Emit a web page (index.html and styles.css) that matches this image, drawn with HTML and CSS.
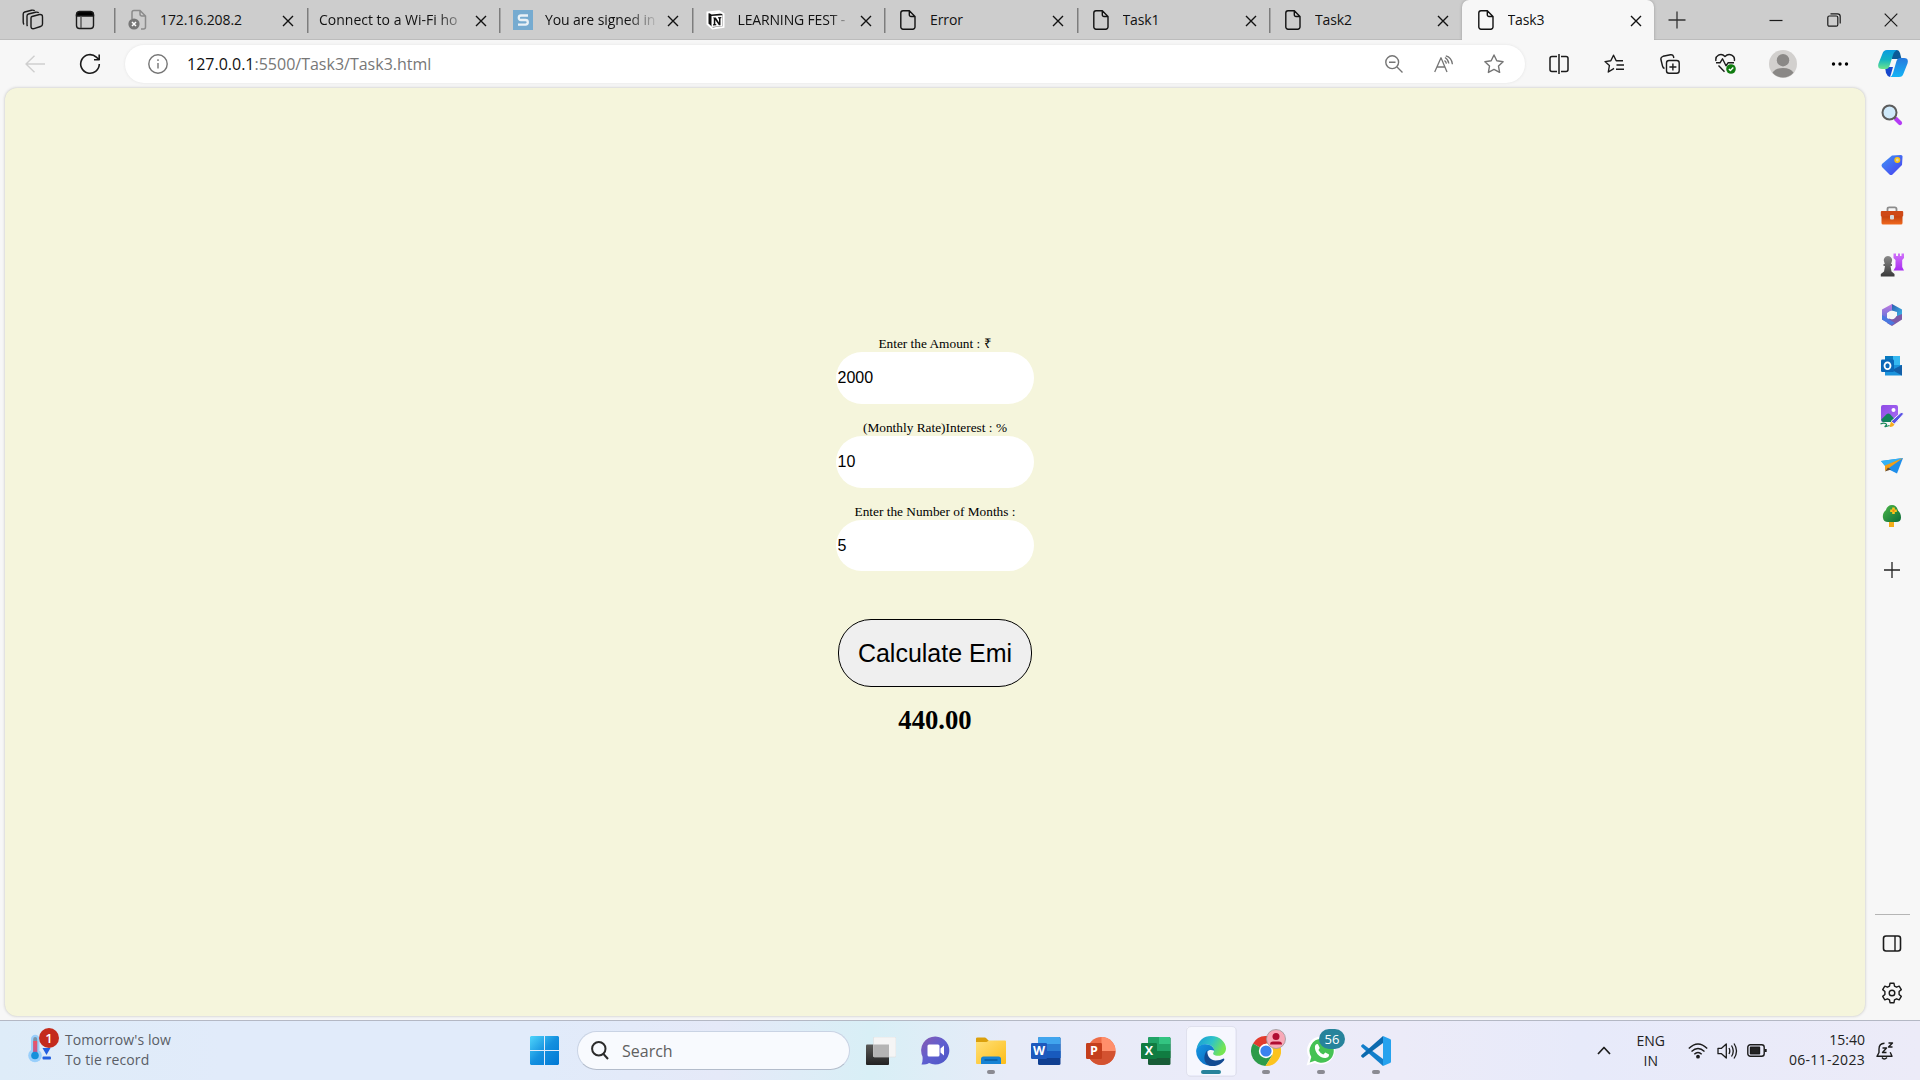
FILE: index.html
```html
<!DOCTYPE html>
<html lang="en">
<head>
<meta charset="utf-8">
<title>Task3</title>
<link rel="stylesheet" href="styles.css">
</head>
<body>
<svg class="defs" width="0" height="0" aria-hidden="true">
  <defs>
    <symbol id="doc" viewBox="0 0 16 20"><path d="M3 .8h6.3L15 6.5V17a2.200 2.200 0 0 1-2.200 2.200H3A2.200 2.200 0 0 1 .8 17V3A2.200 2.200 0 0 1 3 .8zM9.300 1v3.800a1.700 1.700 0 0 0 1.700 1.700h4"/></symbol>
    <symbol id="close" viewBox="0 0 12 12"><path d="M1 1l10 10M11 1L1 11"/></symbol>
    <linearGradient id="gTag" x1="0" y1="0" x2="1" y2="1"><stop offset="0" stop-color="#3f97f5"/><stop offset="1" stop-color="#4a3cf0"/></linearGradient>
    <linearGradient id="gBox" x1="0" y1="0" x2="0" y2="1"><stop offset="0" stop-color="#b8380c"/><stop offset="1" stop-color="#f0691e"/></linearGradient>
    <linearGradient id="gPawn" x1="0" y1="0" x2="0" y2="1"><stop offset="0" stop-color="#8a8a8a"/><stop offset="1" stop-color="#3a3a3a"/></linearGradient>
    <linearGradient id="gRook" x1="0" y1="0" x2="0" y2="1"><stop offset="0" stop-color="#d173fa"/><stop offset="1" stop-color="#a82cf0"/></linearGradient>
    <linearGradient id="gWin" x1="0" y1="0" x2="1" y2="1"><stop offset="0" stop-color="#4fd5fb"/><stop offset=".5" stop-color="#1490df"/><stop offset="1" stop-color="#0078d4"/></linearGradient>
    <linearGradient id="gChat" x1="0" y1="0" x2="1" y2="1"><stop offset="0" stop-color="#8a5bb0"/><stop offset=".5" stop-color="#5f5fd0"/><stop offset="1" stop-color="#4b55c5"/></linearGradient>
    <linearGradient id="gFold" x1="0" y1="0" x2="1" y2="1"><stop offset="0" stop-color="#ffe078"/><stop offset="1" stop-color="#fdbd18"/></linearGradient>
    <linearGradient id="gCopA" x1="0" y1="0" x2="0" y2="1"><stop offset="0" stop-color="#0a9be0"/><stop offset=".5" stop-color="#12b3c4"/><stop offset="1" stop-color="#6ce58b"/></linearGradient>
    <linearGradient id="gCopB" x1="0" y1="0" x2="0" y2="1"><stop offset="0" stop-color="#2679dd"/><stop offset="1" stop-color="#14b4f6"/></linearGradient>
    <linearGradient id="gEdgeA" x1="0" y1="0" x2="1" y2=".4"><stop offset="0" stop-color="#1596d9"/><stop offset=".55" stop-color="#2fc3c9"/><stop offset="1" stop-color="#75e552"/></linearGradient>
    <linearGradient id="gEdgeB" x1="0" y1="0" x2="1" y2="1"><stop offset="0" stop-color="#1597e2"/><stop offset="1" stop-color="#0b62bb"/></linearGradient>
    <linearGradient id="gTree" x1="0" y1="0" x2="1" y2="1"><stop offset="0" stop-color="#4db847"/><stop offset="1" stop-color="#0b6b38"/></linearGradient>
    <linearGradient id="gView" x1="0" y1="0" x2="0" y2="1"><stop offset="0" stop-color="#5a5a58"/><stop offset="1" stop-color="#222"/></linearGradient>
    <linearGradient id="gPic" x1="0" y1="0" x2="1" y2="1"><stop offset="0" stop-color="#8f4be6"/><stop offset="1" stop-color="#a86cf3"/></linearGradient>
    <linearGradient id="gTherm" x1="0" y1="0" x2="0" y2="1"><stop offset="0" stop-color="#f05264"/><stop offset="1" stop-color="#b55b9c"/></linearGradient>
    <linearGradient id="gHexA" x1="0" y1="0" x2="1" y2="1"><stop offset="0" stop-color="#2c4fa5"/><stop offset="1" stop-color="#3dc3f2"/></linearGradient>
    <linearGradient id="gHexB" x1="0" y1="0" x2="0" y2="1"><stop offset="0" stop-color="#c27be0"/><stop offset="1" stop-color="#4c6fd8"/></linearGradient>
  </defs>
</svg>

<div class="window">
  <header class="tabstrip">
    <div class="strip-tools">
      <svg class="line" width="22" height="22" viewBox="0 0 22 22"><path d="M10 7.500L17.500 5.500Q20.500 5 20.500 8V15Q20.500 17 18.500 17.500L12 19.600Q9 20.200 9 17.500V9Q9 7.800 10 7.500zM5.500 17.200Q5 16.500 5 15.500V7Q5 5.500 6.500 5L13.500 3.200Q16 2.800 16.700 4M2 15.500Q1.200 14.500 1.200 13V5Q1.200 3.500 2.700 3L9.500 1.200Q12 .8 12.600 2"/></svg>
      <svg class="line" width="20" height="20" viewBox="0 0 20 20"><rect x="1.500" y="2" width="17" height="16.500" rx="3"/><path d="M1.500 5a3.500 3.500 0 0 1 3-3.500h11a3.500 3.500 0 0 1 3 3.500v1h-17z" fill="#000"/><path d="M6 6v12" stroke="#555"/></svg>
    </div>
    <nav class="tabs">
      <div class="tab">
        <svg class="fav" width="20" height="22" viewBox="0 0 20 22"><path d="M4 10V3.500Q4 1.500 6 1.500h6l5.500 5.500v11q0 2-2 2H13M12 1.500V5q0 2 2 2h3.500" fill="none" stroke="#8b8b8b" stroke-width="1.500"/><circle cx="6" cy="15" r="5.600" fill="#777"/><path d="M4 13l4 4M8 13l-4 4" stroke="#fff" stroke-width="1.500"/></svg>
        <span class="title">172.16.208.2</span><svg class="x"><use href="#close"/></svg>
      </div>
      <div class="tab no-icon"><span class="title fade">Connect to a Wi-Fi ho</span><svg class="x"><use href="#close"/></svg></div>
      <div class="tab">
        <svg class="fav" width="20" height="20" viewBox="0 0 20 20"><path fill="#76abd0" d="M0 0h20v20H0z"/><path d="M15 5.500H8Q5.800 5.500 5.800 7.800T8 10h4.500Q14.800 10 14.800 12.300T12.500 14.600H5" fill="none" stroke="#e9f1f6" stroke-width="2.300"/></svg>
        <span class="title fade">You are signed in</span><svg class="x"><use href="#close"/></svg>
      </div>
      <div class="tab">
        <svg class="fav" width="20" height="20" viewBox="0 0 20 20"><path d="M1.500 2.500L13 1.200l4.500 2.800v13L6.500 18.500 1.500 14z" stroke="#fff" stroke-width="2" fill="#111"/><path d="M3 2.800l10-1 3 1.800-10.500.8z" fill="#fff"/><path d="M5.500 6l11-.7v10.900l-11 .8z" fill="#fff"/><path d="M7 7.500h2.800l3.200 5V8.500l-1-.2v-1l3.300-.2v1l-.8.300v6.900h-1.600L9.300 10v4l1 .3v.9l-3.300.2v-1l.8-.3V8.700z" fill="#111"/></svg>
        <span class="title fade late">LEARNING FEST -</span><svg class="x"><use href="#close"/></svg>
      </div>
      <div class="tab"><svg class="fav doc"><use href="#doc"/></svg><span class="title">Error</span><svg class="x"><use href="#close"/></svg></div>
      <div class="tab"><svg class="fav doc"><use href="#doc"/></svg><span class="title">Task1</span><svg class="x"><use href="#close"/></svg></div>
      <div class="tab"><svg class="fav doc"><use href="#doc"/></svg><span class="title">Task2</span><svg class="x"><use href="#close"/></svg></div>
      <div class="tab active"><svg class="fav doc"><use href="#doc"/></svg><span class="title">Task3</span><svg class="x"><use href="#close"/></svg></div>
    </nav>
    <svg class="newtab" width="18" height="18" viewBox="0 0 18 18"><path d="M9 .5v17M.5 9h17"/></svg>
    <div class="controls">
      <svg width="14" height="14" viewBox="0 0 14 14"><path d="M.5 7.500h13"/></svg>
      <svg width="14" height="14" viewBox="0 0 14 14"><rect x=".8" y="3" width="10" height="10.200" rx="1.500"/><path d="M3.500 .8h7q2.700 0 2.700 2.700v7"/></svg>
      <svg width="14" height="14" viewBox="0 0 14 14"><path d="M.7 .7l12.600 12.600M13.300 .7L.7 13.300"/></svg>
    </div>
  </header>

  <div class="toolbar">
    <div class="nav-tools">
      <svg class="line pale" width="20" height="18" viewBox="0 0 20 18"><path d="M20 9H1M9.500 .8L1 9l8.500 8.200"/></svg>
      <svg class="line" width="22" height="22" viewBox="0 0 22 22"><path d="M20.300 11a9.300 9.300 0 1 1-3-6.900L20 6.500M20.200 1.500v5.200h-5.200" stroke-width="1.600"/></svg>
    </div>
    <div class="address">
      <svg class="line grey" width="20" height="20" viewBox="0 0 20 20"><circle cx="10" cy="10" r="9.200"/><path d="M10 9v5.500M10 5.300v1.700"/></svg>
      <span class="url"><b>127.0.0.1</b>:5500/Task3/Task3.html</span>
      <svg class="line grey" width="18" height="18" viewBox="0 0 18 18"><circle cx="7.200" cy="7.200" r="6.400"/><path d="M12 12l5.500 5.500M4 7.200h6.500"/></svg>
      <svg class="line grey" width="19" height="18" viewBox="0 0 19 18"><path d="M.7 17L7 2.800 13 17M3 12h8M11 2.500a8 8 0 0 1 3.800 6M11.800 .8c4 1 6.200 4.200 6.600 8.500M10.500 5.500q1.600 1.200 1.900 3.200" stroke-width="1.300"/></svg>
      <svg class="line grey" width="20" height="20" viewBox="0 0 20 20"><path d="M10 1l2.800 5.800 6.300.9-4.600 4.400 1.100 6.300L10 15.400l-5.600 3 1.100-6.300L.9 7.700l6.300-.9z"/></svg>
    </div>
    <div class="actions">
      <svg class="line" width="20" height="20" viewBox="0 0 20 20"><path d="M8 2.500H3Q1 2.500 1 4.500v11q0 2 2 2h5M12 2.500h5q2 0 2 2v11q0 2-2 2h-5M10 0v20" stroke-width="1.500"/></svg>
      <svg class="line" width="20" height="20" viewBox="0 0 20 20"><path d="M8.500 15.300L4.300 18l1.100-6.500L1 7.600l5.800-.8L9.500 1.200l2.700 5.600H19M12.500 11H20M12 15.200h8M8.500 15.300l1.500-1"/></svg>
      <svg class="line" width="20" height="20" viewBox="0 0 20 20"><rect x="6.500" y="6.500" width="12.700" height="12.700" rx="2.500"/><path d="M12.900 9.500v7M9.400 13h7M4.500 14.500Q3 14 2.500 12L.9 5.500Q.5 3 3 2.300L10.500.8Q13 .5 13.500 2.500L13.800 4"/></svg>
      <svg class="line" width="21" height="21" viewBox="0 0 21 21"><path d="M1 8C-.2 3 5.800-1 10 3.500 14.300-1 20.500 3 19.300 8M1 9.800h4l2.500-4 3.500 7 2-3h6M3.500 12.500l6 6.200"/><circle cx="16" cy="16" r="4.800" fill="#107c10" stroke="none"/><path d="M13.900 16l1.500 1.500 2.900-3" stroke="#fff"/></svg>
      <svg width="28" height="28" viewBox="0 0 28 28"><circle cx="14" cy="14" r="14" fill="#d2d0ce"/><circle cx="14" cy="10.200" r="6.200" fill="#8a8886"/><path d="M3.500 22.800Q6 18 14 18t10.500 4.800A14 14 0 0 1 3.500 22.800z" fill="#8a8886"/></svg>
      <svg width="18" height="6" viewBox="0 0 18 6"><circle cx="2.500" cy="3" r="1.700"/><circle cx="9" cy="3" r="1.700"/><circle cx="15.500" cy="3" r="1.700"/></svg>
      <svg width="30" height="27" viewBox="0 0 30 27"><path d="M13 0h6q2 0 3 3l1.500 6H14z" fill="#0b5a97"/><path d="M7 17h8l-2 7-1 3Q9 26 8 23z" fill="#1747cc"/><path d="M17 0H9Q5.500 0 4.500 3.500L.5 13.500Q-1 19 4 19h4q2.500 0 3.500-3L15 5q1-4 4-4.500z" fill="url(#gCopA)"/><path d="M12 27h9q3.500 0 4.500-3.500l4-10Q31 8 26 8h-4q-2.500 0-3.500 3L15 23q-1 3.500-3 4z" fill="url(#gCopB)"/></svg>
    </div>
  </div>

  <div class="content">
    <main class="page">
      <form class="emi">
        <label for="amount">Enter the Amount : ₹</label>
        <input id="amount" type="text" value="2000">
        <label for="rate">(Monthly Rate)Interest : %</label>
        <input id="rate" type="text" value="10">
        <label for="months">Enter the Number of Months :</label>
        <input id="months" type="text" value="5">
        <button type="button">Calculate Emi</button>
        <output>440.00</output>
      </form>
    </main>
    <aside class="sidebar">
      <svg width="22" height="22" viewBox="0 0 22 22"><path d="M15 15l4 4" stroke="#b43bf5" stroke-width="4.200" stroke-linecap="round"/><path d="M12.500 12.500l2 2" stroke="#666" stroke-width="2"/><circle cx="8.500" cy="8.500" r="7" fill="#cfe9fa" stroke="#5c5c5c" stroke-width="2"/></svg>
      <svg width="22" height="22" viewBox="0 0 22 22"><path d="M11 1.500L20 1q1.500 0 1.500 1.500L21 11 11.500 20.500q-1.500 1-3 0L1 13q-1-1.500 0-3z" fill="url(#gTag)"/><circle cx="16.300" cy="6" r="2.200" fill="#dcd5b0" stroke="#ffc40c" stroke-width="1.600"/></svg>
      <svg width="24" height="19" viewBox="0 0 24 19"><path d="M7.500 5V3q0-1.700 1.700-1.700h5.600q1.700 0 1.700 1.700v2" fill="none" stroke="#8c8c8c" stroke-width="1.800"/><rect x="1.500" y="8" width="21" height="10.500" rx="1.500" fill="url(#gBox)"/><rect x=".8" y="5" width="22.400" height="5.500" rx="1" fill="#cf4917"/><rect x="10" y="9" width="4" height="4.500" rx="1" fill="#d5dadf"/></svg>
      <svg width="24" height="24" viewBox="0 0 24 24"><path d="M13.500.5h2.500V3h2V.5h2V3h1.500V.5H24V5l-1.800 2v7l1.800 3.500H13.500l2-3.500V7l-2-2z" fill="url(#gRook)"/><path d="M4.200 9a4.200 4.200 0 1 1 7.500 0l-.7 2h1v2h-1.500l1 5.500 3 2.500v2.500H.8V21l3.200-2.500L5 13H3.500v-2h1.300z" fill="url(#gPawn)"/></svg>
      <svg width="22" height="24" viewBox="0 0 22 24"><path d="M11 1l10 5.500v10L16 14V9L8 7z" fill="url(#gHexA)"/><path d="M11 1L1 6.500v10L6 19V10l5-3z" fill="url(#gHexB)"/><path d="M21 16.500L11 23l-5-3 1-4 9-3 5-2z" fill="#7d5aa8"/><path d="M1 12v4.500L10 22.300l4-2.300-8-5z" fill="#4b78e0"/><circle cx="11" cy="12" r="4.300" fill="#f7f7f7"/></svg>
      <svg width="22" height="22" viewBox="0 0 22 22"><path d="M4 1h15v12H4z" fill="#35b8f1"/><path d="M4 1h8v5H4z" fill="#087abf"/><path d="M4 10l17 0v10.500H4z" fill="#1b93dc"/><path d="M21 10v10.500L11 15z" fill="#135fa8"/><rect x="0" y="4.500" width="13" height="12.500" rx="1.200" fill="#0a67b8"/><ellipse cx="6.500" cy="10.700" rx="3" ry="3.400" fill="none" stroke="#fff" stroke-width="1.800"/></svg>
      <svg width="24" height="24" viewBox="0 0 24 24"><rect x="1" y="1" width="17" height="17" rx="2" fill="url(#gPic)"/><path d="M1.300 15.500l5-5q2-1.800 4 0l6 6.500-2 1H3.500q-2 0-2.200-2.500z" fill="#12845c"/><circle cx="13.500" cy="6" r="2" fill="#fff"/><path d="M11 17.500L21 8.500q2-.5 2.500 1.500L14.500 20z" fill="#5a52e6" stroke="#f7f7f7"/><path d="M11 17.500l3.500 3q-1.500 3-5 2.300z" fill="#f6ad20"/><path d="M.5 20q3-1.500 5-.5t0 2.500 4-.5" fill="none" stroke="#19875b" stroke-width="1.300"/></svg>
      <svg width="22" height="17" viewBox="0 0 22 17"><path d="M0 4L22 1 16 16.500 7 12z" fill="#1f8eea"/><path d="M0 4L22 1 4 9z" fill="#35b2f4"/><path d="M22 1L4 8.500V14l4-3z" fill="#f29f18"/><path d="M4 14.500l3-4 3 2z" fill="#654a2d"/></svg>
      <svg width="20" height="24" viewBox="0 0 20 24"><path d="M7 16h5v7H7z" fill="#f3ad18"/><path d="M10 1C7 1 4.500 3 4 6 1 8 .5 12 1 14q.5 4 5 4h8q5 0 5-4.500Q19 9 16 6.500 14.500 1 10 1z" fill="url(#gTree)"/><path d="M11.500 3.500v6.500M8.200 6.700h6.600" stroke="#fcc61d" stroke-width="2.600"/><circle cx="11.500" cy="6.700" r="1.200" fill="#ed8b15"/></svg>
      <svg class="plus" width="16" height="16" viewBox="0 0 16 16"><path d="M8 0v16M0 8h16"/></svg>
      <hr>
      <svg class="line panel" width="20" height="17" viewBox="0 0 20 17"><rect x="1.500" y="1" width="17" height="15" rx="2.500" stroke-width="1.600"/><path d="M13 1v15"/></svg>
      <svg class="line gear" width="22" height="22" viewBox="0 0 22 22"><path d="M9 1.300h4l.5 2.800 2 1.100 2.700-1.100 2.100 3.500-2.200 1.900v3l2.200 1.900-2.100 3.500-2.700-1.100-2 1.100-.5 2.800H9l-.5-2.800-2-1.100-2.700 1.100-2.100-3.500 2.200-1.900v-3L1.700 7.600l2.100-3.500 2.700 1.100 2-1.100z"/><circle cx="11" cy="11" r="2.800"/></svg>
    </aside>
  </div>
</div>

<footer class="taskbar">
  <div class="weather">
    <div class="thermo">
      <svg width="24" height="30" viewBox="0 0 24 30"><path d="M3 16V5a4.200 4.200 0 0 1 8.400 0v11" fill="#99cffb"/><circle cx="7" cy="21.500" r="6.800" fill="#99cffb"/><rect x="5.200" y="3" width="4" height="18" rx="2" fill="#7b93a8"/><path d="M5.200 7h4v14h-4z" fill="url(#gTherm)"/><circle cx="7" cy="21.500" r="3.800" fill="#1490db"/><path d="M14.500 14h8l-4 7z" fill="#2260e0"/><rect x="14.500" y="22.500" width="8.500" height="3" rx="1" fill="#2260e0"/></svg>
      <span class="alert">1</span>
    </div>
    <p>Tomorrow's low<br>To tie record</p>
  </div>
  <div class="apps">
    <svg class="start" width="29" height="29" viewBox="0 0 29 29"><path d="M1 0h13v14H0V1zM15 0h13l1 1v13H15zM0 15h14v14H1l-1-1zM15 15h14v13l-1 1H15z" fill="url(#gWin)"/></svg>
    <div class="search"><svg width="18" height="19" viewBox="0 0 18 19"><circle cx="7.800" cy="7.800" r="6.700"/><path d="M12.500 13l4.500 5"/></svg><span>Search</span></div>
    <div class="app"><svg width="30" height="28" viewBox="0 0 30 28"><rect y="7.500" width="23" height="20.500" rx="1" fill="url(#gView)"/><rect x="7.500" y="0" width="22.500" height="20" rx="1" fill="#f5f5f5" stroke="#ddd" stroke-width=".6"/><rect x="7.500" y="7.500" width="15.500" height="12.500" fill="#b4b4b4"/></svg></div>
    <div class="app"><svg width="29" height="29" viewBox="0 0 29 29"><path d="M14.500.5A14 14 0 1 1 8 27Q6 28.500.5 28.500 2 25 1.500 20.500A14 14 0 0 1 14.500.5z" fill="url(#gChat)"/><rect x="6.500" y="8.500" width="12" height="12" rx="1.500" fill="#fff"/><path d="M19.500 12.500l3.500-3v10l-3.500-3z" fill="#fff"/></svg></div>
    <div class="app run"><svg width="30" height="27" viewBox="0 0 30 27"><path d="M0 1.500Q0 .5 1.500.5H9q1 0 2 1.500l2 2V8H0z" fill="#dba00b"/><path d="M0 5h10.500L13 3.500h16q1 0 1 1V26q0 1-1 1H1q-1 0-1-1z" fill="url(#gFold)"/><path d="M5 27v-5q0-2.500 2.500-2.500h15q2.500 0 2.500 2.500v5z" fill="#1582d4"/><path d="M8.500 23h13" stroke="#085696" stroke-width="1.300"/></svg></div>
    <div class="app"><svg width="30" height="28" viewBox="0 0 30 28"><rect x="7" width="22.500" height="28" rx="1.500" fill="#103f91"/><path d="M7 7h22.500v14H7z" fill="#2b7cd3"/><path d="M7 14h22.500v7H7z" fill="#185abd"/><path d="M8.500 0H28q1.500 0 1.500 1.500V7H7V1.500Q7 0 8.500 0z" fill="#41a5ee"/><rect y="6" width="16" height="16" rx="1.200" fill="#1d59bd"/><text x="8" y="18.300">W</text></svg></div>
    <div class="app"><svg width="30" height="28" viewBox="0 0 30 28"><circle cx="15.500" cy="14" r="14" fill="#ed6c47"/><path d="M15.500 0a14 14 0 0 1 14 14h-14z" fill="#ff8f6b"/><path d="M1.500 14h28a14 14 0 0 1-28 0z" fill="#d35230"/><rect y="6" width="16" height="16" rx="1.200" fill="#c43e1c"/><text x="8" y="18.300">P</text></svg></div>
    <div class="app"><svg width="30" height="28" viewBox="0 0 30 28"><rect x="7" width="22.500" height="28" rx="1.500" fill="#185c37"/><path d="M7 1.500Q7 0 8.500 0H18v21H7z" fill="#21a366"/><path d="M18 0h10q1.500 0 1.500 1.500V7H18z" fill="#33c481"/><path d="M18 7h11.500v7H18z" fill="#21a366"/><path d="M7 14h22.500v7H7z" fill="#107c41"/><rect y="6" width="16" height="16" rx="1.200" fill="#107c41"/><text x="8" y="18.300">X</text></svg></div>
    <div class="app run current"><svg width="30" height="30" viewBox="0 0 30 30"><path d="M.5 13C2 4.500 8 0 15 0c9 0 15 6.500 15 12.500 0 4.500-3.500 7.300-7.500 7.300-5 0-6-2-5-3.300C19 14.500 18 9 11 8.500 6 8.300 2.500 10 .5 13z" fill="url(#gEdgeA)"/><path d="M.1 15C.5 10.500 5 8.300 9.500 8.300c6 0 9 4 8.800 6.500C12 12 9 17 10.500 21c1.500 5 6.500 7.500 10.500 7.600A15 15 0 0 1 .1 15z" fill="url(#gEdgeB)"/><path d="M11.500 14c-1 6 3 10.500 8 10.500 3.500 0 6-1 8-2 1 0 1 1 .5 2.100-3 4.200-8 6-12.500 5.400C8 29.500 6 20 11.500 14z" fill="#124a92"/></svg></div>
    <div class="app run"><svg width="30" height="30" viewBox="0 0 30 30"><path d="M15 15L2 7.500A15 15 0 0 1 28 7.500H15z" fill="#e33b2e"/><path d="M15 15L2 7.500A15 15 0 0 0 14.500 30l7-11z" fill="#2d9b4a"/><path d="M15 7.500h13A15 15 0 0 1 14.500 30l7-11z" fill="#fcc31e"/><circle cx="15" cy="15" r="7.200" fill="#fff"/><circle cx="15" cy="15" r="5.600" fill="#3b82ee"/></svg>
      <svg class="profile" width="20" height="20" viewBox="0 0 20 20"><circle cx="10" cy="10" r="9.500" fill="#f8a9b8" stroke="#999" stroke-width=".8"/><circle cx="10" cy="7.500" r="3.500" fill="#b00d31"/><path d="M4 15.500q0-3 3-3h6q3 0 3 3z" fill="#b00d31"/></svg></div>
    <div class="app run"><svg width="30" height="30" viewBox="0 0 30 30"><path d="M15.500.5A14 14 0 1 1 8.500 27L.5 29.500 3 21.500A14 14 0 0 1 15.500.5z" fill="#fff"/><path d="M15.500 2.800A12 12 0 1 1 9 24.700l-5.300 1.700L5.300 21A12 12 0 0 1 15.500 2.800z" fill="#46c254"/><path d="M9 10q1-2.500 3-1.700l1.700 3.500q0 1-1.300 2.200 1.500 3 4.900 4.500l2-2 3.800 2q0 3-3.500 3.500C14 22.500 8 16 9 10z" fill="#fff"/></svg><span class="count">56</span></div>
    <div class="app run"><svg width="30" height="30" viewBox="0 0 30 30"><path d="M2 8L22 23v7L.5 11q-.8-1 0-1.700z" fill="#137fcb"/><path d="M2 22L22 7V0L.5 19q-.8 1 0 1.700z" fill="#0b69ae"/><path d="M22 0l7 3q1 .4 1 1.500v21q0 1.100-1 1.500l-7 3z" fill="#26a2ee"/></svg></div>
  </div>
  <div class="tray">
    <svg class="line" width="14" height="9" viewBox="0 0 14 9"><path d="M1 8l6-6.500L13 8" stroke-width="1.700"/></svg>
    <p class="lang">ENG<br>IN</p>
    <svg class="line" width="20" height="16" viewBox="0 0 20 16"><path d="M.8 5.500q9.200-9 18.400 0M3.500 8.500q6.500-6.200 13 0M6.300 11.300q3.700-3.500 7.400 0"/><circle cx="10" cy="13.700" r="1.200" fill="#222"/></svg>
    <svg class="line" width="21" height="18" viewBox="0 0 21 18"><path d="M1 6.300h3.500L9.300 2v14L4.500 11.700H1zM12 6q1.600 3 0 6M14.500 3.500q3.500 5.500 0 11M17 1.500q5 7.500 0 15" stroke-width="1.300"/></svg>
    <svg class="line" width="20" height="13" viewBox="0 0 20 13"><rect x=".8" y=".8" width="16.400" height="11.400" rx="2.500"/><path d="M3.500 3.300h9v6.400h-9z" fill="#222"/><path d="M18.700 5v3" stroke-width="2"/></svg>
    <p class="clock">15:40<br><span>06-11-2023</span></p>
    <svg class="line" width="18" height="18" viewBox="0 0 18 18"><path d="M8.500 1.300Q3 1.500 3 7v3.500L1 14.300h15l-1.800-4M6 15.500q2 3 5 0M6.500 6h4l-4 4.500h4M12.500 1h4l-4 4h4" stroke-width="1.400"/></svg>
  </div>
</footer>
</body>
</html>
```
FILE: styles.css
```css
* { box-sizing: border-box; }
body { margin: 0; width: 1920px; height: 1080px; overflow: hidden; display: flex; flex-direction: column; background: #f7f7f7; font-family: "Open Sans", "Noto Sans", sans-serif; color: #111; }
.defs { position: absolute; }
svg { display: block; flex: none; }
p { margin: 0; }
.line { fill: none; stroke: #1b1b1b; stroke-width: 1.4; stroke-linejoin: round; }
.line.grey { stroke: #757575; }
.line.pale { stroke: #cfcfcf; }

.window { height: 1020px; display: flex; flex-direction: column; }
.tabstrip { height: 40px; display: flex; align-items: center; background: #cdcdcd; box-shadow: inset 0 -1px #bcbcbc; }
.strip-tools { width: 114px; padding-left: 22px; display: flex; align-items: center; gap: 31px; }
.tabs { display: flex; height: 40px; }
.tab { width: 192.5px; display: flex; align-items: center; padding: 0 12.5px 0 14px; background: linear-gradient(#7d7d7d, #7d7d7d) 0 8px / 1.5px 25px no-repeat; }
.fav { width: 20px; margin-right: 12px; }
.doc { width: 16px; height: 20px; margin: 0 14px 0 2px; fill: none; stroke: #111; stroke-width: 1.4; }
.title { flex: 1; min-width: 0; overflow: hidden; white-space: nowrap; font-size: 14px; letter-spacing: -.1px; line-height: 20px; }
.fade { mask-image: linear-gradient(90deg, #000 82px, transparent 114px); }
.fade.late { letter-spacing: -.15px; mask-image: linear-gradient(90deg, #000 92px, transparent 114px); }
.no-icon { padding-left: 12.5px; }
.no-icon .fade { letter-spacing: 0; mask-image: linear-gradient(90deg, #000 118px, transparent 150px); }
.x { width: 12px; height: 12px; margin: 2px 0 0 6px; stroke: #111; stroke-width: 1.4; }
.active { background: #f7f7f7; border-radius: 7px 7px 0 0; box-shadow: 0 0 3px #999; clip-path: inset(0 -3px 0 -3px); }
.newtab { margin-left: 14px; stroke: #333; stroke-width: 1.3; }
.controls { margin-left: auto; padding-right: 22px; display: flex; gap: 43.5px; fill: none; stroke: #1b1b1b; stroke-width: 1.2; }

.toolbar { height: 47px; display: flex; align-items: center; }
.nav-tools { width: 125px; padding-left: 25px; display: flex; align-items: center; gap: 34px; }
.address { width: 1400px; height: 38px; padding: 0 21px 0 22.5px; display: flex; align-items: center; border-radius: 19px; background: #fff; box-shadow: 0 0 3px #e2e2e2; }
.address svg + svg { margin-left: 31px; }
.url { flex: 1; margin-left: 19.5px; font-size: 16px; letter-spacing: 0; color: #777; }
.url b { font-weight: 400; color: #111; }
.actions { flex: 1; padding-left: 6px; display: grid; grid-template-columns: repeat(4, 55.5px) 59.5px 54.5px 52.5px; align-items: center; justify-items: center; }

.content { height: 933px; display: flex; }
.page { width: 1860px; height: 928px; margin: 1px 0 0 5px; border-radius: 12px; background: #f5f5dc; box-shadow: 0 0 3px #bbb; display: flex; justify-content: center; padding-top: 247px; }
.emi { width: 198px; display: flex; flex-direction: column; align-items: center; font-family: "Liberation Serif", serif; color: #000; }
.emi label { height: 17px; line-height: 17px; font-size: 13.33px; white-space: nowrap; }
.emi input { width: 198px; height: 51.5px; margin-bottom: 15.5px; padding: 0 1.5px; border: 0; border-radius: 26px; background: #fff; font: 16px "Liberation Sans", sans-serif; }
.emi #months { height: 51px; margin-bottom: 16px; }
.emi button { width: 194px; height: 68px; margin-top: 32px; padding: 1px 0 0; border: 1.5px solid #000; border-radius: 33px; background: #efefef; color: #000; font: 25px "Liberation Sans", sans-serif; }
.emi output { margin-top: 17px; font-size: 26.67px; line-height: 32px; font-weight: 700; }

.sidebar { width: 55px; padding: 3px 1px 2px 0; display: grid; grid-template-rows: repeat(9, 50.1px) 58px 1fr 4px 50px 50px; justify-items: center; align-items: center; }
.sidebar hr { grid-row: 12; align-self: start; width: 35px; height: 1px; margin: 0; border: 0; background: #b5b5b5; }
.panel { grid-row: 13; }
.gear { grid-row: 14; }
.plus { stroke: #222; stroke-width: 1.3; }

.taskbar { height: 60px; display: flex; border-top: 1px solid #b4b8c4; background: linear-gradient(90deg, #deecf8 0, #e1ebfa 220px, #e1ebfa 540px, #e5e9f8 720px, #d8eff6 870px, #e7ebf8 1010px, #ebebf9 1250px, #ecebf8 1400px, #e7eafa 1580px, #ecebf8 1920px); font-size: 14px; line-height: 20px; }
.weather { width: 517px; padding: 8px 0 0 28px; display: flex; color: #5a5e66; }
.weather p { margin-left: 13px; padding-top: 1px; letter-spacing: .12px; }
.thermo { position: relative; padding-top: 5px; }
.alert { position: absolute; left: 11px; top: -1px; width: 20px; height: 20px; border-radius: 50%; background: #c42b1c; color: #fff; text-align: center; font-size: 13px; font-weight: 600; }
.apps { display: flex; align-items: center; padding-left: 13px; }
.search { width: 273px; height: 39px; margin: 0 3px 0 18px; padding-left: 13px; display: flex; align-items: center; gap: 13px; border: 1px solid #c9d3e4; border-bottom-color: #b3bccb; border-radius: 20px; background: #f8fafe; font-size: 16px; color: #606060; }
.search svg { fill: none; stroke: #2b2b2b; stroke-width: 2; }
.app { position: relative; width: 55px; height: 59px; display: grid; place-items: center; }
.app text { fill: #fff; font-size: 12.5px; font-weight: 700; text-anchor: middle; }
.run::after { content: ""; position: absolute; bottom: 6px; width: 8px; height: 4px; border-radius: 2px; background: #8a8a92; }
.current { background: linear-gradient(#f6f7fe, #f6f7fe) center / 48px 48px no-repeat; }
.current::before { content: ""; position: absolute; left: 3px; top: 5px; width: 49px; height: 49px; border: 1px solid #e0e1ee; border-radius: 5px; }
.current::after { width: 20px; background: #27839b; }
.profile { position: absolute; left: 28px; top: 8px; }
.count { position: absolute; left: 26px; top: 8px; width: 26px; height: 20px; border-radius: 10px; background: #27839b; color: #fff; text-align: center; font-size: 13px; }
.tray { flex: 1; display: flex; align-items: center; justify-content: flex-end; padding-right: 26px; color: #222; }
.lang { margin: 0 23px 0 26px; text-align: center; }
.tray svg + svg { margin-left: 9px; }
.clock { width: 80px; margin: -2px 11px 0 18px; text-align: right; }
.clock span { letter-spacing: .3px; }
```
